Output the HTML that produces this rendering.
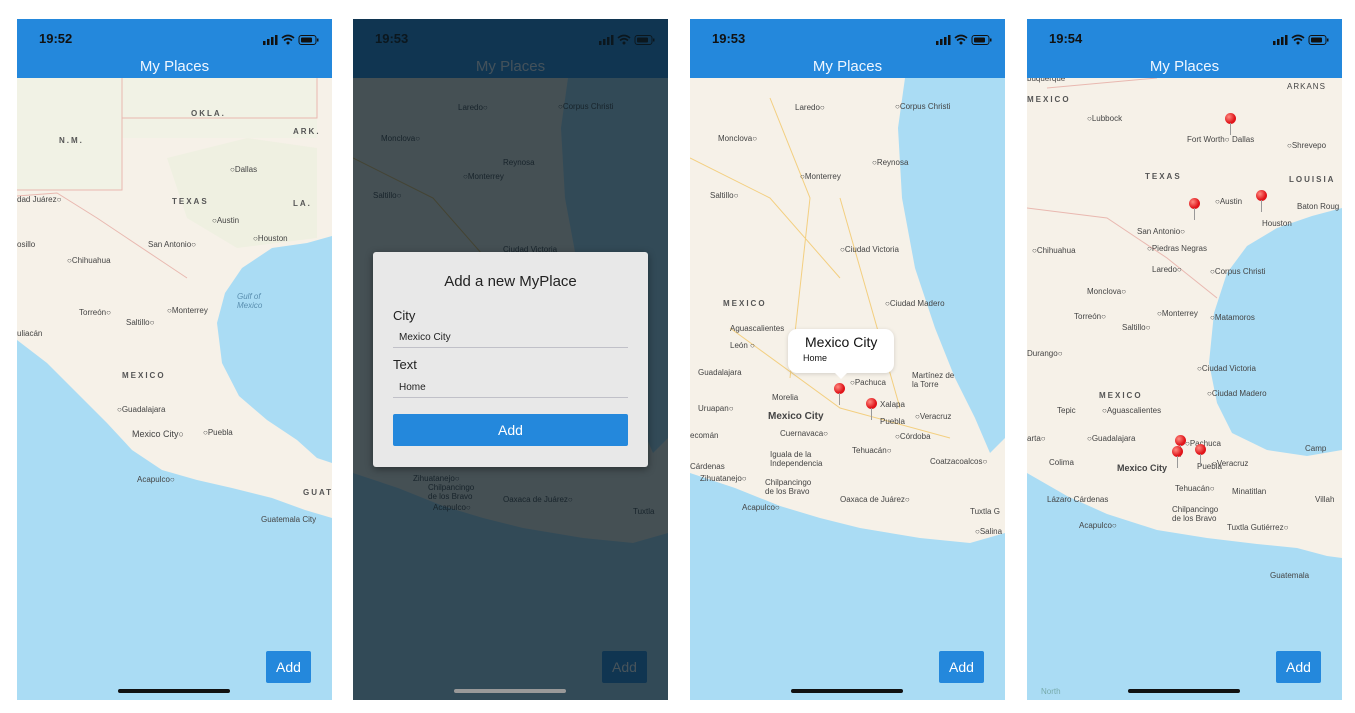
<!DOCTYPE html>
<html><head><meta charset="utf-8"><style>
*{margin:0;padding:0;box-sizing:border-box}
body{width:1355px;height:713px;background:#fff;position:relative;overflow:hidden;font-family:"Liberation Sans",sans-serif}
.ph{position:absolute;top:19px;width:315px;height:681px;overflow:hidden;background:#f6f1e8}
.hd{position:absolute;left:0;top:0;width:315px;height:59px;background:#2488dc;color:#fff}
.tm{position:absolute;left:22px;top:12px;font-size:13px;font-weight:bold;color:#111}
.ti{position:absolute;left:0;width:315px;top:39px;text-align:center;font-size:15px;color:#eef6ff}
.map{position:absolute;left:0;top:59px}
.lb{position:absolute;font-size:8px;color:#444;white-space:nowrap}
.st{font-weight:bold;letter-spacing:2px;color:#555}
.add{position:absolute;left:249px;top:632px;width:45px;height:32px;background:#2488dc;color:#fff;font-size:14px;text-align:center;line-height:32px;border-radius:2px}
.bar{position:absolute;left:101px;top:670px;width:112px;height:4px;border-radius:2px;background:#111}
.icons{position:absolute;right:13px;top:14px}
.pin{position:absolute;width:11px;height:11px;border-radius:50%;background:radial-gradient(circle at 35% 35%,#ff8a80,#e0141a 60%)}
.pin:after{content:"";position:absolute;left:5px;top:10px;width:1px;height:12px;background:#999}
</style></head><body>

<!-- phone 1 -->
<div class="ph" style="left:17px">
<svg class="map" width="315" height="622">
<rect width="315" height="622" fill="#f6f1e8"/>
<path d="M0,0H105V112H0Z M105,0H300V60H105Z" fill="#eff2e4" opacity=".7"/>
<path d="M150,80 L230,60 L300,70 L300,160 L220,170 L170,140Z" fill="#ebf0dc" opacity=".6"/>
<path d="M315,158 L290,165 L255,170 L225,190 L208,215 L200,245 L205,285 L222,318 L250,342 L280,362 L300,380 L315,385 V158Z" fill="#aadcf4"/>
<path d="M0,262 L30,285 L60,315 L90,345 L115,372 L145,392 L180,402 L215,410 L255,420 L288,432 L315,440 V622 H0Z" fill="#aadcf4"/>
<path d="M105,0V112H0 M105,40H300V0 M0,118 L40,115 L80,140 L110,160 L140,180 L170,200" stroke="#e9b8b0" fill="none" stroke-width="1"/>
</svg>
<div class="lb st" style="left:174px;top:90px">OKLA.</div>
<div class="lb st" style="left:276px;top:108px">ARK.</div>
<div class="lb st" style="left:42px;top:117px">N.M.</div>
<div class="lb" style="left:213px;top:146px">○Dallas</div>
<div class="lb st" style="left:155px;top:178px">TEXAS</div>
<div class="lb st" style="left:276px;top:180px">LA.</div>
<div class="lb" style="left:0;top:176px">dad Juárez○</div>
<div class="lb" style="left:195px;top:197px">○Austin</div>
<div class="lb" style="left:131px;top:221px">San Antonio○</div>
<div class="lb" style="left:236px;top:215px">○Houston</div>
<div class="lb" style="left:0;top:221px">osillo</div>
<div class="lb" style="left:50px;top:237px">○Chihuahua</div>
<div class="lb" style="left:220px;top:273px;color:#5a8fb0;font-style:italic">Gulf of<br>Mexico</div>
<div class="lb" style="left:62px;top:289px">Torreón○</div>
<div class="lb" style="left:109px;top:299px">Saltillo○</div>
<div class="lb" style="left:150px;top:287px">○Monterrey</div>
<div class="lb" style="left:0;top:310px">uliacán</div>
<div class="lb st" style="left:105px;top:352px">MEXICO</div>
<div class="lb" style="left:100px;top:386px">○Guadalajara</div>
<div class="lb" style="left:115px;top:410px;font-size:9px">Mexico City○</div>
<div class="lb" style="left:186px;top:409px">○Puebla</div>
<div class="lb" style="left:120px;top:456px">Acapulco○</div>
<div class="lb st" style="left:286px;top:469px">GUAT</div>
<div class="lb" style="left:244px;top:496px">Guatemala City</div>
<div class="hd"><div class="tm">19:52</div><div class="icons"><svg width="56" height="12"><rect x="0" y="7" width="2.5" height="4" fill="#111"/><rect x="4" y="5" width="2.5" height="6" fill="#111"/><rect x="8" y="3" width="2.5" height="8" fill="#111"/><rect x="12" y="1" width="2.5" height="10" fill="#111"/><path d="M19,4 Q25,-1 31,4 M21,6.5 Q25,3 29,6.5" stroke="#111" stroke-width="1.6" fill="none"/><circle cx="25" cy="9" r="1.5" fill="#111"/><rect x="36" y="1.5" width="17" height="9" rx="2.5" stroke="#111" fill="none"/><rect x="38" y="3.5" width="11" height="5" rx="1" fill="#111"/><rect x="54" y="4.5" width="1.5" height="3" fill="#111"/></svg></div><div class="ti">My Places</div></div>
<div class="add">Add</div><div class="bar"></div>
</div>

<!-- phone 2 -->
<div class="ph" style="left:353px">
<svg class="map" width="315" height="622">
<rect width="315" height="622" fill="#f6f1e8"/>
<path d="M215,0 L315,0 V360 L300,375 L285,340 L265,300 L245,250 L225,190 L212,120 L208,50Z" fill="#aadcf4"/>
<path d="M0,395 L45,410 L90,428 L130,440 L170,450 L230,460 L280,465 L315,455 V622 H0Z" fill="#aadcf4"/>
<path d="M0,80 L80,120 L150,200 M40,250 L150,330 L260,360" stroke="#f0c060" fill="none" stroke-width="1"/>
</svg>
<div class="lb" style="left:105px;top:84px">Laredo○</div>
<div class="lb" style="left:205px;top:83px">○Corpus Christi</div>
<div class="lb" style="left:28px;top:115px">Monclova○</div>
<div class="lb" style="left:110px;top:153px">○Monterrey</div>
<div class="lb" style="left:150px;top:139px">Reynosa</div>
<div class="lb" style="left:20px;top:172px">Saltillo○</div>
<div class="lb" style="left:150px;top:226px">Ciudad Victoria</div>
<div class="lb" style="left:60px;top:455px">Zihuatanejo○</div>
<div class="lb" style="left:75px;top:464px">Chilpancingo<br>de los Bravo</div>
<div class="lb" style="left:150px;top:476px">Oaxaca de Juárez○</div>
<div class="lb" style="left:80px;top:484px">Acapulco○</div>
<div class="lb" style="left:280px;top:488px">Tuxtla</div>
<div class="hd"><div class="tm">19:53</div><div class="icons"><svg width="56" height="12"><rect x="0" y="7" width="2.5" height="4" fill="#111"/><rect x="4" y="5" width="2.5" height="6" fill="#111"/><rect x="8" y="3" width="2.5" height="8" fill="#111"/><rect x="12" y="1" width="2.5" height="10" fill="#111"/><path d="M19,4 Q25,-1 31,4 M21,6.5 Q25,3 29,6.5" stroke="#111" stroke-width="1.6" fill="none"/><circle cx="25" cy="9" r="1.5" fill="#111"/><rect x="36" y="1.5" width="17" height="9" rx="2.5" stroke="#111" fill="none"/><rect x="38" y="3.5" width="11" height="5" rx="1" fill="#111"/><rect x="54" y="4.5" width="1.5" height="3" fill="#111"/></svg></div><div class="ti">My Places</div></div>
<div class="add">Add</div>
<div style="position:absolute;left:0;top:0;width:315px;height:681px;background:rgba(10,25,35,0.75)"></div>
<div class="bar" style="background:#999"></div>
<div style="position:absolute;left:20px;top:233px;width:275px;height:215px;background:#e8e8e8;border-radius:3px;box-shadow:0 2px 8px rgba(0,0,0,.4)">
<div style="position:absolute;left:0;width:275px;top:21px;text-align:center;font-size:15px;color:#222">Add a new MyPlace</div>
<div style="position:absolute;left:20px;top:56px;font-size:13px;color:#222">City</div>
<div style="position:absolute;left:20px;top:80px;width:235px;height:16px;border-bottom:1px solid #c0c0c8;font-size:10px;padding-left:6px;color:#222">Mexico City</div>
<div style="position:absolute;left:20px;top:105px;font-size:13px;color:#222">Text</div>
<div style="position:absolute;left:20px;top:130px;width:235px;height:16px;border-bottom:1px solid #c0c0c8;font-size:10px;padding-left:6px;color:#222">Home</div>
<div style="position:absolute;left:20px;top:162px;width:235px;height:32px;background:#2488dc;color:#fff;text-align:center;line-height:32px;font-size:14px;border-radius:2px">Add</div>
</div>
</div>

<!-- phone 3 -->
<div class="ph" style="left:690px">
<svg class="map" width="315" height="622">
<rect width="315" height="622" fill="#f6f1e8"/>
<path d="M215,0 L315,0 V360 L300,375 L285,340 L265,300 L245,250 L225,190 L212,120 L208,50Z" fill="#aadcf4"/>
<path d="M0,395 L45,410 L90,428 L130,440 L170,450 L230,460 L280,465 L315,455 V622 H0Z" fill="#aadcf4"/>
<path d="M0,80 L80,120 L150,200 M40,250 L150,330 L260,360 M80,20 L120,120 L100,300 M150,120 L210,330" stroke="#f3cf80" fill="none" stroke-width="1"/>
</svg>
<div class="lb" style="left:105px;top:84px">Laredo○</div>
<div class="lb" style="left:205px;top:83px">○Corpus Christi</div>
<div class="lb" style="left:28px;top:115px">Monclova○</div>
<div class="lb" style="left:182px;top:139px">○Reynosa</div>
<div class="lb" style="left:110px;top:153px">○Monterrey</div>
<div class="lb" style="left:20px;top:172px">Saltillo○</div>
<div class="lb" style="left:150px;top:226px">○Ciudad Victoria</div>
<div class="lb" style="left:195px;top:280px">○Ciudad Madero</div>
<div class="lb st" style="left:33px;top:280px">MEXICO</div>
<div class="lb" style="left:40px;top:305px">Aguascalientes</div>
<div class="lb" style="left:40px;top:322px">León ○</div>
<div class="lb" style="left:8px;top:349px">Guadalajara</div>
<div class="lb" style="left:160px;top:359px">○Pachuca</div>
<div class="lb" style="left:222px;top:352px">Martínez de<br>la Torre</div>
<div class="lb" style="left:82px;top:374px">Morelia</div>
<div class="lb" style="left:8px;top:385px">Uruapan○</div>
<div class="lb" style="left:190px;top:381px">Xalapa</div>
<div class="lb" style="left:225px;top:393px">○Veracruz</div>
<div class="lb" style="left:78px;top:392px;font-size:10px;font-weight:bold">Mexico City</div>
<div class="lb" style="left:190px;top:398px">Puebla</div>
<div class="lb" style="left:90px;top:410px">Cuernavaca○</div>
<div class="lb" style="left:0;top:412px">ecomán</div>
<div class="lb" style="left:205px;top:413px">○Córdoba</div>
<div class="lb" style="left:80px;top:431px">Iguala de la<br>Independencia</div>
<div class="lb" style="left:162px;top:427px">Tehuacán○</div>
<div class="lb" style="left:240px;top:438px">Coatzacoalcos○</div>
<div class="lb" style="left:0;top:443px">Cárdenas</div>
<div class="lb" style="left:10px;top:455px">Zihuatanejo○</div>
<div class="lb" style="left:75px;top:459px">Chilpancingo<br>de los Bravo</div>
<div class="lb" style="left:150px;top:476px">Oaxaca de Juárez○</div>
<div class="lb" style="left:52px;top:484px">Acapulco○</div>
<div class="lb" style="left:280px;top:488px">Tuxtla G</div>
<div class="lb" style="left:285px;top:508px">○Salina</div>
<div class="hd"><div class="tm">19:53</div><div class="icons"><svg width="56" height="12"><rect x="0" y="7" width="2.5" height="4" fill="#111"/><rect x="4" y="5" width="2.5" height="6" fill="#111"/><rect x="8" y="3" width="2.5" height="8" fill="#111"/><rect x="12" y="1" width="2.5" height="10" fill="#111"/><path d="M19,4 Q25,-1 31,4 M21,6.5 Q25,3 29,6.5" stroke="#111" stroke-width="1.6" fill="none"/><circle cx="25" cy="9" r="1.5" fill="#111"/><rect x="36" y="1.5" width="17" height="9" rx="2.5" stroke="#111" fill="none"/><rect x="38" y="3.5" width="11" height="5" rx="1" fill="#111"/><rect x="54" y="4.5" width="1.5" height="3" fill="#111"/></svg></div><div class="ti">My Places</div></div>
<div class="pin" style="left:144px;top:364px"></div>
<div class="pin" style="left:176px;top:379px"></div>
<div style="position:absolute;left:98px;top:310px;width:106px;height:44px;background:#fff;border-radius:9px;box-shadow:0 1px 4px rgba(0,0,0,.15)">
<div style="position:absolute;left:17px;top:5px;font-size:14px;color:#111">Mexico City</div>
<div style="position:absolute;left:15px;top:24px;font-size:9px;color:#111">Home</div></div>
<div style="position:absolute;left:144px;top:353px;width:0;height:0;border-left:7px solid transparent;border-right:7px solid transparent;border-top:7px solid #fff"></div>
<div class="add">Add</div><div class="bar"></div>
</div>

<!-- phone 4 -->
<div class="ph" style="left:1027px">
<svg class="map" width="315" height="622">
<rect width="315" height="622" fill="#f6f1e8"/>
<path d="M315,130 L285,138 L250,150 L220,168 L200,195 L187,235 L182,285 L190,325 L205,355 L240,372 L280,378 L315,372Z" fill="#aadcf4"/>
<path d="M0,395 L40,418 L80,436 L130,452 L180,460 L230,466 L270,470 L300,478 L315,480 V622 H0Z" fill="#aadcf4"/>
<path d="M20,10 L130,0 M0,130 L80,140 L140,180 L190,220" stroke="#e9b8b0" fill="none"/>
</svg>
<div class="lb" style="left:0;top:55px">buquerque</div>
<div class="lb" style="left:260px;top:63px;letter-spacing:1px">ARKANS</div>
<div class="lb st" style="left:0;top:76px">MEXICO</div>
<div class="lb" style="left:60px;top:95px">○Lubbock</div>
<div class="lb" style="left:160px;top:116px">Fort Worth○</div>
<div class="lb" style="left:205px;top:116px">Dallas</div>
<div class="lb" style="left:260px;top:122px">○Shrevepo</div>
<div class="lb st" style="left:118px;top:153px">TEXAS</div>
<div class="lb st" style="left:262px;top:156px">LOUISIA</div>
<div class="lb" style="left:188px;top:178px">○Austin</div>
<div class="lb" style="left:270px;top:183px">Baton Roug</div>
<div class="lb" style="left:110px;top:208px">San Antonio○</div>
<div class="lb" style="left:235px;top:200px">Houston</div>
<div class="lb" style="left:5px;top:227px">○Chihuahua</div>
<div class="lb" style="left:120px;top:225px">○Piedras Negras</div>
<div class="lb" style="left:125px;top:246px">Laredo○</div>
<div class="lb" style="left:183px;top:248px">○Corpus Christi</div>
<div class="lb" style="left:60px;top:268px">Monclova○</div>
<div class="lb" style="left:47px;top:293px">Torreón○</div>
<div class="lb" style="left:95px;top:304px">Saltillo○</div>
<div class="lb" style="left:130px;top:290px">○Monterrey</div>
<div class="lb" style="left:183px;top:294px">○Matamoros</div>
<div class="lb" style="left:0;top:330px">Durango○</div>
<div class="lb" style="left:170px;top:345px">○Ciudad Victoria</div>
<div class="lb" style="left:180px;top:370px">○Ciudad Madero</div>
<div class="lb st" style="left:72px;top:372px">MEXICO</div>
<div class="lb" style="left:30px;top:387px">Tepic</div>
<div class="lb" style="left:75px;top:387px">○Aguascalientes</div>
<div class="lb" style="left:0;top:415px">arta○</div>
<div class="lb" style="left:60px;top:415px">○Guadalajara</div>
<div class="lb" style="left:158px;top:420px">○Pachuca</div>
<div class="lb" style="left:22px;top:439px">Colima</div>
<div class="lb" style="left:185px;top:440px">○Veracruz</div>
<div class="lb" style="left:90px;top:444px;font-size:9px;font-weight:bold">Mexico City</div>
<div class="lb" style="left:170px;top:443px">Puebla</div>
<div class="lb" style="left:278px;top:425px">Camp</div>
<div class="lb" style="left:148px;top:465px">Tehuacán○</div>
<div class="lb" style="left:205px;top:468px">Minatitlan</div>
<div class="lb" style="left:288px;top:476px">Villah</div>
<div class="lb" style="left:20px;top:476px">Lázaro Cárdenas</div>
<div class="lb" style="left:145px;top:486px">Chilpancingo<br>de los Bravo</div>
<div class="lb" style="left:52px;top:502px">Acapulco○</div>
<div class="lb" style="left:200px;top:504px">Tuxtla Gutiérrez○</div>
<div class="lb" style="left:243px;top:552px">Guatemala</div>
<div class="lb" style="left:14px;top:668px;color:#7aa">North</div>
<div class="hd"><div class="tm">19:54</div><div class="icons"><svg width="56" height="12"><rect x="0" y="7" width="2.5" height="4" fill="#111"/><rect x="4" y="5" width="2.5" height="6" fill="#111"/><rect x="8" y="3" width="2.5" height="8" fill="#111"/><rect x="12" y="1" width="2.5" height="10" fill="#111"/><path d="M19,4 Q25,-1 31,4 M21,6.5 Q25,3 29,6.5" stroke="#111" stroke-width="1.6" fill="none"/><circle cx="25" cy="9" r="1.5" fill="#111"/><rect x="36" y="1.5" width="17" height="9" rx="2.5" stroke="#111" fill="none"/><rect x="38" y="3.5" width="11" height="5" rx="1" fill="#111"/><rect x="54" y="4.5" width="1.5" height="3" fill="#111"/></svg></div><div class="ti">My Places</div></div>
<div class="pin" style="left:198px;top:94px"></div>
<div class="pin" style="left:162px;top:179px"></div>
<div class="pin" style="left:229px;top:171px"></div>
<div class="pin" style="left:148px;top:416px"></div>
<div class="pin" style="left:145px;top:427px"></div>
<div class="pin" style="left:168px;top:425px"></div>
<div class="add">Add</div><div class="bar"></div>
</div>
</body></html>
